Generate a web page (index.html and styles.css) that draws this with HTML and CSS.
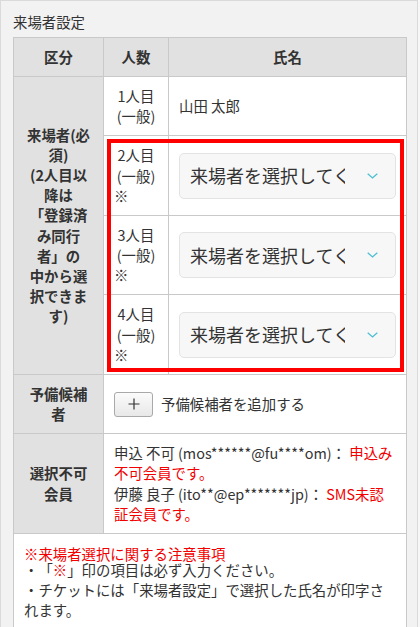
FILE: index.html
```html
<!DOCTYPE html>
<html lang="ja">
<head>
<meta charset="utf-8">
<title>来場者設定</title>
<link rel="stylesheet" href="styles.css">
</head>
<body>
<section class="panel">
  <h2 class="panel-title">来場者設定</h2>
  <div class="visitor-table">
    <div class="cell head r1 c1">区分</div>
    <div class="cell head r1 c2">人数</div>
    <div class="cell head r1 c3">氏名</div>

    <div class="cell label rs4 c1">来場者(必須)<br>(2人目以降は<br>「登録済み同行者」の<br>中から選択できます)</div>

    <div class="cell count r2 c2"><span class="count-text">1人目(一般)</span></div>
    <div class="cell name r2 c3">山田 太郎</div>

    <div class="cell count r3 c2"><span class="count-text">2人目(一般)</span><span class="req">※</span></div>
    <div class="cell name r3 c3">
      <div class="select"><span class="select-text">来場者を選択してください</span><svg class="chev" width="11" height="6" viewBox="0 0 11 6"><polyline points="0.7,0.7 5.5,5 10.3,0.7" fill="none" stroke="#4dbfd2" stroke-width="1.3"/></svg></div>
    </div>

    <div class="cell count r4 c2"><span class="count-text">3人目(一般)</span><span class="req">※</span></div>
    <div class="cell name r4 c3">
      <div class="select"><span class="select-text">来場者を選択してください</span><svg class="chev" width="11" height="6" viewBox="0 0 11 6"><polyline points="0.7,0.7 5.5,5 10.3,0.7" fill="none" stroke="#4dbfd2" stroke-width="1.3"/></svg></div>
    </div>

    <div class="cell count r5 c2"><span class="count-text">4人目(一般)</span><span class="req">※</span></div>
    <div class="cell name r5 c3">
      <div class="select"><span class="select-text">来場者を選択してください</span><svg class="chev" width="11" height="6" viewBox="0 0 11 6"><polyline points="0.7,0.7 5.5,5 10.3,0.7" fill="none" stroke="#4dbfd2" stroke-width="1.3"/></svg></div>
    </div>

    <div class="highlight"></div>

    <div class="cell label r6 c1">予備候補者</div>
    <div class="cell wide add-row r6">
      <button class="add-btn" type="button"><svg width="12" height="12" viewBox="0 0 12 12"><path d="M6 0.5V11.5M0.5 6H11.5" stroke="#333" stroke-width="1.2" fill="none"/></svg></button>
      <span>予備候補者を追加する</span>
    </div>

    <div class="cell label r7 c1">選択不可会員</div>
    <div class="cell wide r7">申込 不可 (mos******@fu****om)： <span class="red">申込み不可会員です。</span><br>伊藤 良子 (ito**@ep*******jp)： <span class="red">SMS未認証会員です。</span></div>

    <div class="cell notes r8">
      <div class="notes-title red">※来場者選択に関する注意事項</div>
      <div>・「<span class="red">※</span>」印の項目は必ず入力ください。</div>
      <div>・チケットには「来場者設定」で選択した氏名が印字さ<br>れます。</div>
    </div>
  </div>
</section>
</body>
</html>
```

FILE: styles.css
```css
* { box-sizing: border-box; }

html, body {
  margin: 0;
  padding: 0;
  background: #f7f7f7;
}

body {
  font-family: "Noto Sans CJK JP", "Noto Sans", sans-serif;
  font-size: 14.4px;
  line-height: 1.4;
  color: #333;
  text-spacing-trim: space-all;
}

.panel {
  width: 418px;
  min-height: 627px;
  background: #f2f2f2;
  border: 1px solid #dadada;
  border-bottom: none;
  padding: 11px 10px 0 12px;
}

.panel-title {
  margin: 0 0 5px;
  font-size: 14.4px;
  font-weight: normal;
  line-height: 20px;
}

.visitor-table {
  display: grid;
  grid-template-columns: 90px 65px minmax(0, 1fr);
  border-top: 1px solid #c9c9c9;
  border-left: 1px solid #c9c9c9;
  background: #fff;
}

.r1 { grid-row: 1; }
.r2 { grid-row: 2; }
.r3 { grid-row: 3; }
.r4 { grid-row: 4; }
.r5 { grid-row: 5; }
.r6 { grid-row: 6; }
.r7 { grid-row: 7; }
.r8 { grid-row: 8; }
.rs4 { grid-row: 2 / 6; }
.c1 { grid-column: 1; }
.c2 { grid-column: 2; }
.c3 { grid-column: 3; }
.wide { grid-column: 2 / 4; }

.cell {
  min-width: 0;
  padding: 9px 10px;
  border-right: 1px solid #c9c9c9;
  border-bottom: 1px solid #c9c9c9;
  background: #fff;
}

.head {
  background: #e1e1e1;
  font-weight: bold;
  text-align: center;
}

.label {
  background: #e1e1e1;
  font-weight: bold;
  text-align: center;
  display: flex;
  align-items: center;
  justify-content: center;
}

.count-text {
  display: block;
  text-align: center;
}

.req { display: block; }

.name {
  display: flex;
  align-items: center;
}

.select {
  width: 100%;
  height: 46px;
  display: flex;
  align-items: center;
  padding: 0 17px 0 10px;
  background: #f7f7f7;
  border: 1px solid #e3e3e3;
  border-radius: 5px;
  font-size: 18px;
  color: #333;
}

.select-text {
  flex: 1;
  min-width: 0;
  overflow: hidden;
  white-space: nowrap;
  margin-right: 22px;
}

.chev { flex: none; }

.highlight {
  grid-row: 3 / 6;
  grid-column: 2 / 4;
  margin: 3px;
  border: 4px solid #ff0000;
  pointer-events: none;
  z-index: 2;
}

.add-row {
  display: flex;
  align-items: center;
  gap: 8px;
}

.add-btn {
  width: 39px;
  height: 25px;
  padding: 0;
  display: flex;
  align-items: center;
  justify-content: center;
  background: linear-gradient(#fbfbfb, #e8e8e8);
  border: 1px solid #a9a9a9;
  border-radius: 3px;
}

.red { color: #f20000; }

.notes {
  grid-column: 1 / -1;
  padding: 13px 20px 9px 10px;
}

.notes-title { line-height: 13px; }
```
